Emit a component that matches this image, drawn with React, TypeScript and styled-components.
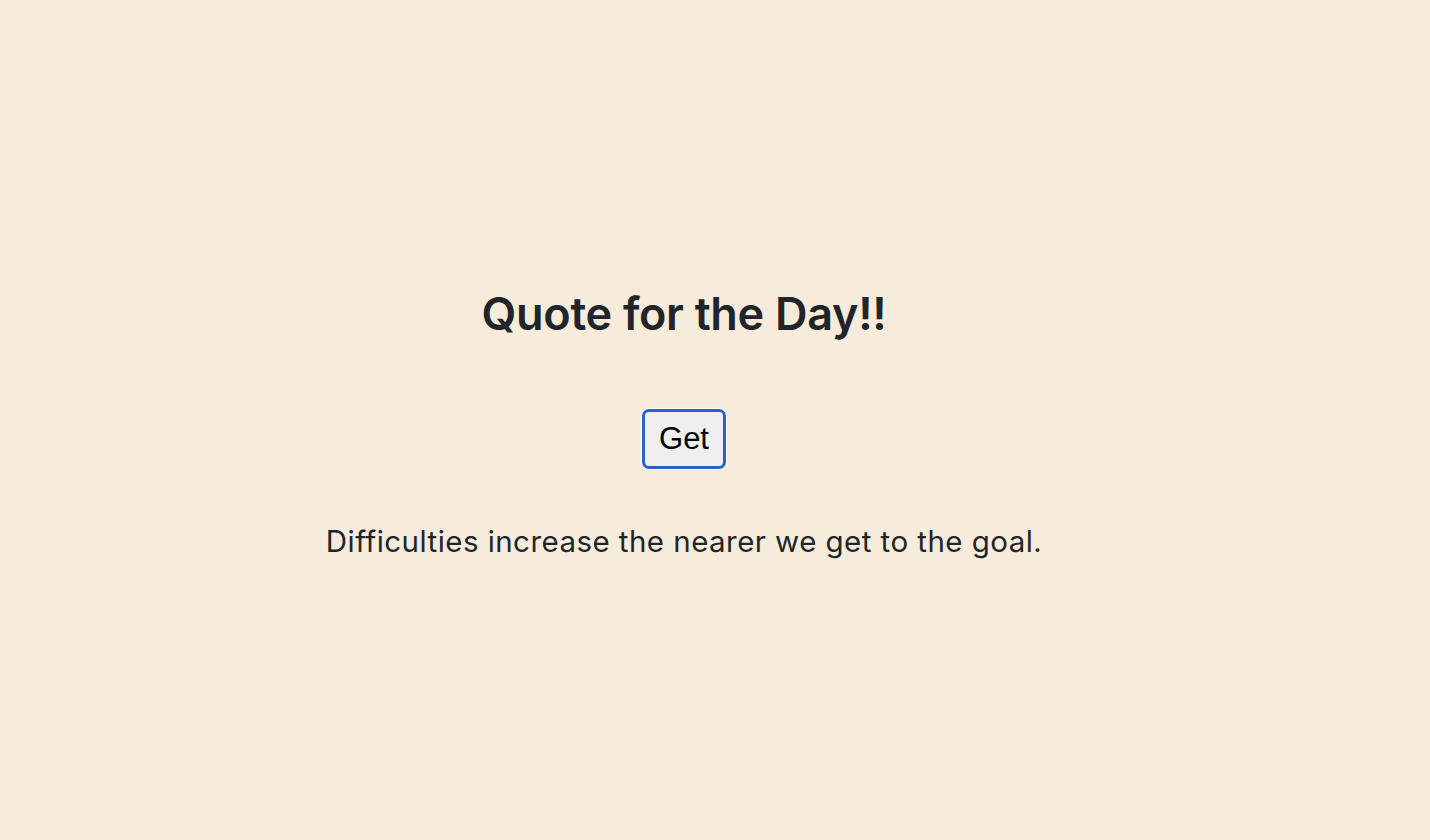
import React from "react";
import styled, { createGlobalStyle } from "styled-components";

const GlobalStyle = createGlobalStyle`
  html, body {
    margin: 0;
    padding: 0;
    background: #f7ecdb;
  }
  body {
    font-family: Inter, "Noto Sans", "Liberation Sans", sans-serif;
    color: #212529;
  }
`;

const Page = styled.main`
  box-sizing: border-box;
  height: 100vh;
  padding: 4px 62px 0 0;
  display: flex;
  flex-direction: column;
  align-items: center;
  justify-content: center;
  background: #f7ecdb;
`;

const Title = styled.h1`
  margin: 0;
  font-size: 45px;
  line-height: 56px;
  font-weight: 560;
  letter-spacing: -0.3px;
  color: #212529;
`;

const GetButton = styled.button`
  margin-top: 67px;
  width: 84px;
  height: 60px;
  box-sizing: border-box;
  border: 3px solid #2b5fcc;
  border-radius: 7px;
  box-shadow: 0 0 0 1px #ffffff;
  background: #efefef;
  color: #000000;
  font-family: "Liberation Sans", Arial, sans-serif;
  font-size: 31px;
  padding: 0;
  cursor: pointer;
`;

const Quote = styled.p`
  margin: 55px 0 0;
  font-size: 29.5px;
  line-height: 35px;
  font-weight: 400;
  letter-spacing: 0.45px;
  color: #212529;
`;

export default function App() {
  return (
    <>
      <GlobalStyle />
      <Page>
        <Title>Quote for the Day!!</Title>
        <GetButton>Get</GetButton>
        <Quote>Difficulties increase the nearer we get to the goal.</Quote>
      </Page>
    </>
  );
}
